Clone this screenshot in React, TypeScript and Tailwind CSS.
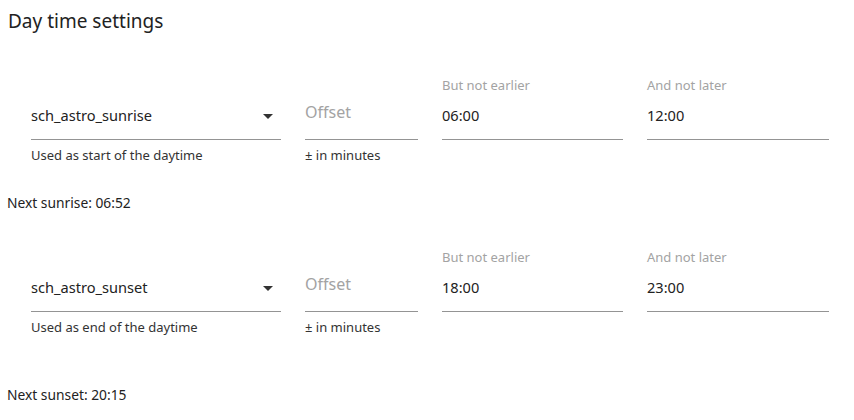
import React from "react";

function Caret() {
  return (
    <svg width="10" height="5" viewBox="0 0 10 5" className="shrink-0">
      <path d="M0 0 L10 0 L5 5 Z" fill="#333" />
    </svg>
  );
}

type RowProps = {
  source: string;
  helper: string;
  earlier: string;
  later: string;
};

function Row({ source, helper, earlier, later }: RowProps) {
  return (
    <div className="flex gap-[24px] pl-[24px]">
      <div className="flex w-[250px] flex-col">
        <div className="h-[16px]" />
        <div className="flex h-[47px] items-center justify-between border-b border-[#949494] pr-[8px]">
          <span className="text-[14.6px] text-[#222]">{source}</span>
          <Caret />
        </div>
        <div className="mt-[7px] text-[13px] leading-[16px] text-[#333]">{helper}</div>
      </div>
      <div className="flex w-[113px] flex-col">
        <div className="h-[16px]" />
        <div className="flex h-[47px] items-center border-b border-[#949494] pb-[8px]">
          <span className="text-[16px] text-[#a3a3a3]">Offset</span>
        </div>
        <div className="mt-[7px] text-[13px] leading-[16px] text-[#333]">± in minutes</div>
      </div>
      <div className="flex w-[181px] flex-col">
        <div className="h-[16px] text-[13px] leading-[16px] text-[#a3a3a3]">But not earlier</div>
        <div className="flex h-[47px] items-center border-b border-[#949494]">
          <span className="text-[14.6px] text-[#222]">{earlier}</span>
        </div>
      </div>
      <div className="flex w-[182px] flex-col">
        <div className="h-[16px] text-[13px] leading-[16px] text-[#a3a3a3]">And not later</div>
        <div className="flex h-[47px] items-center border-b border-[#949494]">
          <span className="text-[14.6px] text-[#222]">{later}</span>
        </div>
      </div>
    </div>
  );
}

export default function App() {
  return (
    <div className="h-[420px] w-[854px] overflow-hidden bg-white px-[7px] font-['Noto_Sans',sans-serif] text-[#222]">
      <div className="pl-[1px] pt-[9px] text-[19px] leading-[24px]">Day time settings</div>
      <div className="mt-[44px]">
        <Row source="sch_astro_sunrise" helper="Used as start of the daytime" earlier="06:00" later="12:00" />
      </div>
      <div className="mt-[32px] text-[13.8px] leading-[16px]">Next sunrise: 06:52</div>
      <div className="mt-[38px]">
        <Row source="sch_astro_sunset" helper="Used as end of the daytime" earlier="18:00" later="23:00" />
      </div>
      <div className="mt-[52px] text-[13.8px] leading-[16px]">Next sunset: 20:15</div>
    </div>
  );
}
